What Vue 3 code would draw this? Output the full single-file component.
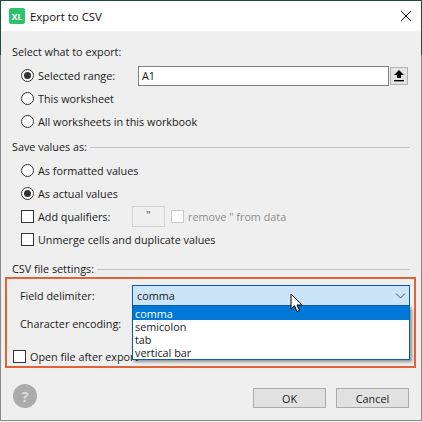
<script setup>
import { ref } from 'vue';

const exportOptions = ref([
  { label: 'Selected range:', checked: true },
  { label: 'This worksheet', checked: false },
  { label: 'All worksheets in this workbook', checked: false }
]);

const delimiters = ['comma', 'semicolon', 'tab', 'vertical bar'];
const selected = ref('comma');
</script>

<template>
  <div class="dialog">
    <header class="titlebar">
      <span class="app-icon">XL</span>
      <span class="title">Export to CSV</span>
      <svg class="close" width="12" height="12" viewBox="0 0 12 12">
        <path d="M1 1L11 11M11 1L1 11" stroke="#111" stroke-width="1" fill="none" />
      </svg>
    </header>

    <main class="body">
      <div class="heading first">Select what to export:</div>
      <div class="options">
        <div v-for="opt in exportOptions" :key="opt.label" class="row">
          <span :class="['radio', { on: opt.checked }]"></span>
          <span class="label" :class="{ range: opt.checked }">{{ opt.label }}</span>
          <template v-if="opt.checked">
            <div class="range-input">A1</div>
            <button class="range-button">
              <svg width="10" height="12" viewBox="0 0 10 12">
                <path d="M5 0L10 5H7V8H3V5H0Z" fill="#000" />
                <rect x="0" y="10" width="10" height="1.4" fill="#000" />
              </svg>
            </button>
          </template>
        </div>
      </div>

      <div class="heading rule">Save values as:</div>
      <div class="options">
        <div class="row"><span class="radio"></span><span class="label">As formatted values</span></div>
        <div class="row"><span class="radio on"></span><span class="label">As actual values</span></div>
        <div class="row">
          <span class="check"></span>
          <span class="label wide">Add qualifiers:</span>
          <div class="qualifier">"</div>
          <span class="check disabled"></span>
          <span class="label muted">remove " from data</span>
        </div>
        <div class="row"><span class="check"></span><span class="label">Unmerge cells and duplicate values</span></div>
      </div>

      <div class="heading rule csv">CSV file settings:</div>
      <section class="highlight">
        <div class="field-row">
          <span class="field-label">Field delimiter:</span>
          <div class="combo">
            <span>{{ selected }}</span>
            <svg width="11" height="6" viewBox="0 0 11 6">
              <path d="M1 0.5L5.5 5L10 0.5" stroke="#555" stroke-width="1" fill="none" />
            </svg>
            <ul class="dropdown">
              <li v-for="d in delimiters" :key="d" :class="{ active: d === selected }">{{ d }}</li>
            </ul>
          </div>
        </div>
        <div class="field-row encoding">
          <span class="field-label">Character encoding:</span>
        </div>
        <div class="open-row">
          <span class="check"></span>
          <span class="label">Open file after export</span>
        </div>
        <svg class="cursor" width="14" height="20" viewBox="0 0 14 20">
          <path d="M1 1V16L4.5 12.8L7 18.5L9.5 17.4L7 12H12Z" fill="#fff" stroke="#000" stroke-width="1" />
        </svg>
      </section>

      <footer class="footer">
        <span class="help">?</span>
        <div class="buttons">
          <button class="btn">OK</button>
          <button class="btn">Cancel</button>
        </div>
      </footer>
    </main>
  </div>
</template>

<style scoped>
.dialog {
  width: 422px;
  height: 421px;
  box-sizing: border-box;
  border: 1px solid #8a8a8a;
  border-image: linear-gradient(#1d4d3c 55px, #8a8a8a 55px) 1;
  background: #efefef;
  font-family: "Open Sans", "Noto Sans", sans-serif;
  font-size: 10.8px;
  color: #1a1a1a;
  display: flex;
  flex-direction: column;
  overflow: hidden;
}

.titlebar {
  height: 30px;
  flex: none;
  background: #fff;
  display: flex;
  align-items: center;
  padding: 0 9px 0 8px;
}

.app-icon {
  width: 16px;
  height: 16px;
  border-radius: 2px;
  background: #2fc26e;
  color: #fff;
  font-size: 8.5px;
  font-weight: 700;
  display: flex;
  align-items: center;
  justify-content: center;
}

.title {
  margin-left: 5px;
  font-size: 11.4px;
  color: #111;
  flex: 1;
}

.body {
  flex: 1;
  display: flex;
  flex-direction: column;
  padding: 0 11px;
}

.heading {
  height: 16px;
  line-height: 16px;
  display: flex;
  align-items: center;
  white-space: nowrap;
}

.heading.first {
  margin-top: 13px;
}

.heading.rule {
  margin-top: 6px;
}

.heading.rule::after {
  content: "";
  flex: 1;
  height: 1px;
  background: #c4c4c4;
  margin-left: 3px;
}

.heading.csv {
  margin-top: 10px;
}

.options {
  padding: 4px 0 0 9px;
}

.row {
  height: 23px;
  display: flex;
  align-items: center;
}

.radio {
  width: 13px;
  height: 13px;
  box-sizing: border-box;
  border: 1px solid #333;
  border-radius: 50%;
  background: #fff;
  flex: none;
  display: flex;
  align-items: center;
  justify-content: center;
}

.radio.on::after {
  content: "";
  width: 7px;
  height: 7px;
  border-radius: 50%;
  background: #333;
}

.check {
  width: 13px;
  height: 13px;
  box-sizing: border-box;
  border: 1px solid #333;
  background: #fff;
  flex: none;
}

.check.disabled {
  border-color: #c8c8c8;
  margin-left: 6px;
}

.label {
  margin-left: 4px;
  white-space: nowrap;
}

.label.wide {
  width: 94px;
  flex: none;
}

.label.range {
  width: 100px;
  flex: none;
}

.label.muted {
  color: #8c8c8c;
}

.range-input {
  width: 251px;
  height: 20px;
  box-sizing: border-box;
  border: 1px solid #808080;
  background: #fff;
  padding-left: 3px;
  line-height: 18px;
  flex: none;
}

.range-button {
  width: 18px;
  height: 18px;
  margin-left: 1px;
  padding: 0;
  border: 1px solid #b4b4b4;
  background: #e4e4e4;
  display: flex;
  align-items: center;
  justify-content: center;
}

.qualifier {
  width: 33px;
  height: 21px;
  box-sizing: border-box;
  border: 1px solid #d2d2d2;
  background: #efefef;
  text-align: center;
  line-height: 15px;
  color: #444;
  flex: none;
}

.highlight {
  position: relative;
  height: 91px;
  margin: 0 -6px 0 -7px;
  box-sizing: border-box;
  border: 2px solid #e0643a;
  padding: 6px 4px 0 13px;
}

.field-row {
  height: 21px;
  display: flex;
  align-items: center;
}

.field-row.encoding {
  margin-top: 7px;
  height: 20px;
}

.field-label {
  width: 112px;
  flex: none;
}

.combo {
  position: relative;
  flex: 1;
  height: 21px;
  box-sizing: border-box;
  border: 1px solid #0a5ea8;
  background: #cce4f7;
  display: flex;
  align-items: center;
  justify-content: space-between;
  padding: 0 3px 0 4px;
}

.dropdown {
  position: absolute;
  left: -1px;
  right: -1px;
  top: 20px;
  margin: 0;
  padding: 0;
  list-style: none;
  background: #fff;
  border: 1px solid #0a5ea8;
  border-top: none;
  box-shadow: 2px 2px 3px rgba(0, 0, 0, 0.4);
  z-index: 2;
}

.dropdown li {
  height: 13px;
  line-height: 13px;
  padding-left: 2px;
}

.dropdown li.active {
  background: #0078d7;
  color: #fff;
  height: 14px;
  line-height: 15px;
}

.open-row {
  display: flex;
  align-items: center;
  margin: 16px 0 0 -7px;
}

.cursor {
  position: absolute;
  left: 283px;
  top: 14px;
  z-index: 3;
}

.footer {
  display: flex;
  align-items: flex-start;
  justify-content: space-between;
  margin-top: 16px;
  padding: 0 1px;
}

.help {
  width: 24px;
  height: 24px;
  border-radius: 50%;
  background: #ababab;
  color: #dcdcdc;
  font-size: 15px;
  font-weight: 700;
  display: flex;
  align-items: center;
  justify-content: center;
}

.buttons {
  display: flex;
  gap: 10px;
  margin-top: 4px;
}

.btn {
  width: 73px;
  height: 20px;
  padding: 0;
  box-sizing: border-box;
  border: 1px solid #ababab;
  background: #e1e1e1;
  font-family: inherit;
  font-size: 10.8px;
  color: #1a1a1a;
}
</style>

<style>
html, body {
  background: #efefef;
}
</style>
